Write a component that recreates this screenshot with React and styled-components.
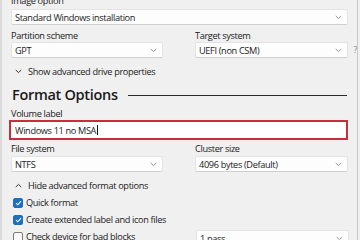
import React from "react";
import styled, { createGlobalStyle } from "styled-components";

const Global = createGlobalStyle`
  html, body { margin: 0; padding: 0; background: #f0f0f0; }
  body { width: 360px; height: 240px; overflow: hidden; }
`;

const FONT = `"Open Sans", "Noto Sans", sans-serif`;

const Window = styled.div`
  width: 358px;
  height: 240px;
  box-sizing: border-box;
  border-right: 1px solid #c9c9c9;
  border-left: 2px solid #dadada;
  background: #f0f0f0;
  overflow: hidden;
  font-family: ${FONT};
  font-size: 9.2px;
  letter-spacing: -0.35px;
  color: #1b1b1b;
`;

const Content = styled.div`
  margin-top: -6px;
  padding: 0 10px 0 9px;
  display: flex;
  flex-direction: column;
`;

const Label = styled.div`
  height: 13px;
  line-height: 13px;
  margin-top: ${(p) => p.$mt ?? 0}px;
  margin-bottom: ${(p) => p.$mb ?? 0}px;
  white-space: nowrap;
`;

const Row = styled.div`
  display: grid;
  grid-template-columns: 152px 153px;
  column-gap: 32px;
  margin-top: ${(p) => p.$mt ?? 0}px;
`;

const Field = styled.div`
  display: flex;
  flex-direction: column;
  position: relative;
`;

const Combo = styled.div`
  height: 16px;
  box-sizing: border-box;
  background: #fdfdfd;
  border: 1px solid #e3e3e3;
  border-bottom-color: #d0d0d0;
  border-radius: 2px;
  display: flex;
  align-items: center;
  justify-content: space-between;
  padding: 0 5px 0 3px;
  white-space: nowrap;
  width: ${(p) => (p.$w ? `${p.$w}px` : "auto")};
  margin-top: ${(p) => p.$mt ?? 0}px;
`;

const Chevron = () => (
  <svg width="7" height="5" viewBox="0 0 7 5">
    <path d="M0.8 1 L3.5 3.6 L6.2 1" fill="none" stroke="#8a8a8a" strokeWidth="0.9" />
  </svg>
);

const Help = styled.span`
  position: absolute;
  right: -9px;
  bottom: 2px;
  font-size: 9px;
  color: #8c8c8c;
`;

const Toggle = styled.div`
  display: flex;
  align-items: center;
  gap: 6px;
  height: 14px;
  padding-left: 4px;
  margin-top: ${(p) => p.$mt ?? 0}px;
  white-space: nowrap;
`;

const Heading = styled.div`
  display: flex;
  align-items: center;
  gap: 10px;
  margin-top: 6px;
  height: 20px;
  padding-left: 1px;
  font-size: 14.5px;
  font-weight: 600;
  letter-spacing: -0.3px;
  color: #1a1a1a;
`;

const Rule = styled.div`
  flex: 1;
  height: 1px;
  background: #2b2b2b;
  margin-top: 3px;
`;

const TextInput = styled.div`
  height: 20px;
  box-sizing: border-box;
  border: 2px solid #c6303e;
  background: #fff;
  display: flex;
  align-items: center;
  padding-left: 4px;
  margin-left: -2px;
  width: 339px;
  white-space: nowrap;
`;

const Caret = styled.span`
  display: inline-block;
  width: 1px;
  height: 10px;
  background: #111;
  margin-left: 1px;
`;

const Lower = styled.div`
  display: grid;
  grid-template-columns: 185px 153px;
  grid-auto-rows: 17px;
  margin-top: 2px;
`;

const CheckRow = styled.div`
  display: flex;
  align-items: center;
  gap: 3px;
  padding-left: 2px;
  white-space: nowrap;
  grid-column: 1;
`;

const Box = styled.span`
  width: 10px;
  height: 10px;
  box-sizing: border-box;
  border-radius: 2px;
  display: flex;
  align-items: center;
  justify-content: center;
  background: ${(p) => (p.$on ? "#1f6fc1" : "#fbfbfb")};
  border: 1px solid ${(p) => (p.$on ? "#1f6fc1" : "#7a7a7a")};
`;

const Check = ({ on }) => (
  <Box $on={on}>
    {on && (
      <svg width="7" height="6" viewBox="0 0 7 6">
        <path d="M1 3.2 L2.8 4.8 L6 1.2" fill="none" stroke="#fff" strokeWidth="1.1" />
      </svg>
    )}
  </Box>
);

const PassCell = styled.div`
  grid-column: 2;
  grid-row: 3;
  align-self: start;
  margin-top: 2px;
`;

export default function App() {
  return (
    <>
      <Global />
      <Window>
        <Content>
          <Label $mb={2}>Image option</Label>
          <Combo $w={337}>
            <span>Standard Windows installation</span>
            <Chevron />
          </Combo>
          <Row $mt={4}>
            <Field>
              <Label>Partition scheme</Label>
              <Combo>
                <span>GPT</span>
                <Chevron />
              </Combo>
            </Field>
            <Field>
              <Label>Target system</Label>
              <Combo>
                <span>UEFI (non CSM)</span>
                <Chevron />
              </Combo>
              <Help>?</Help>
            </Field>
          </Row>
          <Toggle $mt={6}>
            <svg width="7" height="5" viewBox="0 0 7 5">
              <path d="M0.8 1 L3.5 3.6 L6.2 1" fill="none" stroke="#333" strokeWidth="1" />
            </svg>
            <span>Show advanced drive properties</span>
          </Toggle>
          <Heading>
            <span>Format Options</span>
            <Rule />
          </Heading>
          <Label $mt={3}>Volume label</Label>
          <TextInput>
            <span>Windows 11 no MSA</span>
            <Caret />
          </TextInput>
          <Row $mt={2}>
            <Field>
              <Label $mb={1}>File system</Label>
              <Combo>
                <span>NTFS</span>
                <Chevron />
              </Combo>
            </Field>
            <Field>
              <Label $mb={1}>Cluster size</Label>
              <Combo>
                <span>4096 bytes (Default)</span>
                <Chevron />
              </Combo>
            </Field>
          </Row>
          <Toggle $mt={6}>
            <svg width="7" height="5" viewBox="0 0 7 5">
              <path d="M0.8 4 L3.5 1.4 L6.2 4" fill="none" stroke="#333" strokeWidth="1" />
            </svg>
            <span>Hide advanced format options</span>
          </Toggle>
          <Lower>
            <CheckRow>
              <Check on />
              <span>Quick format</span>
            </CheckRow>
            <CheckRow>
              <Check on />
              <span>Create extended label and icon files</span>
            </CheckRow>
            <CheckRow>
              <Check />
              <span>Check device for bad blocks</span>
            </CheckRow>
            <PassCell>
              <Combo>
                <span>1 pass</span>
                <Chevron />
              </Combo>
            </PassCell>
          </Lower>
        </Content>
      </Window>
    </>
  );
}
